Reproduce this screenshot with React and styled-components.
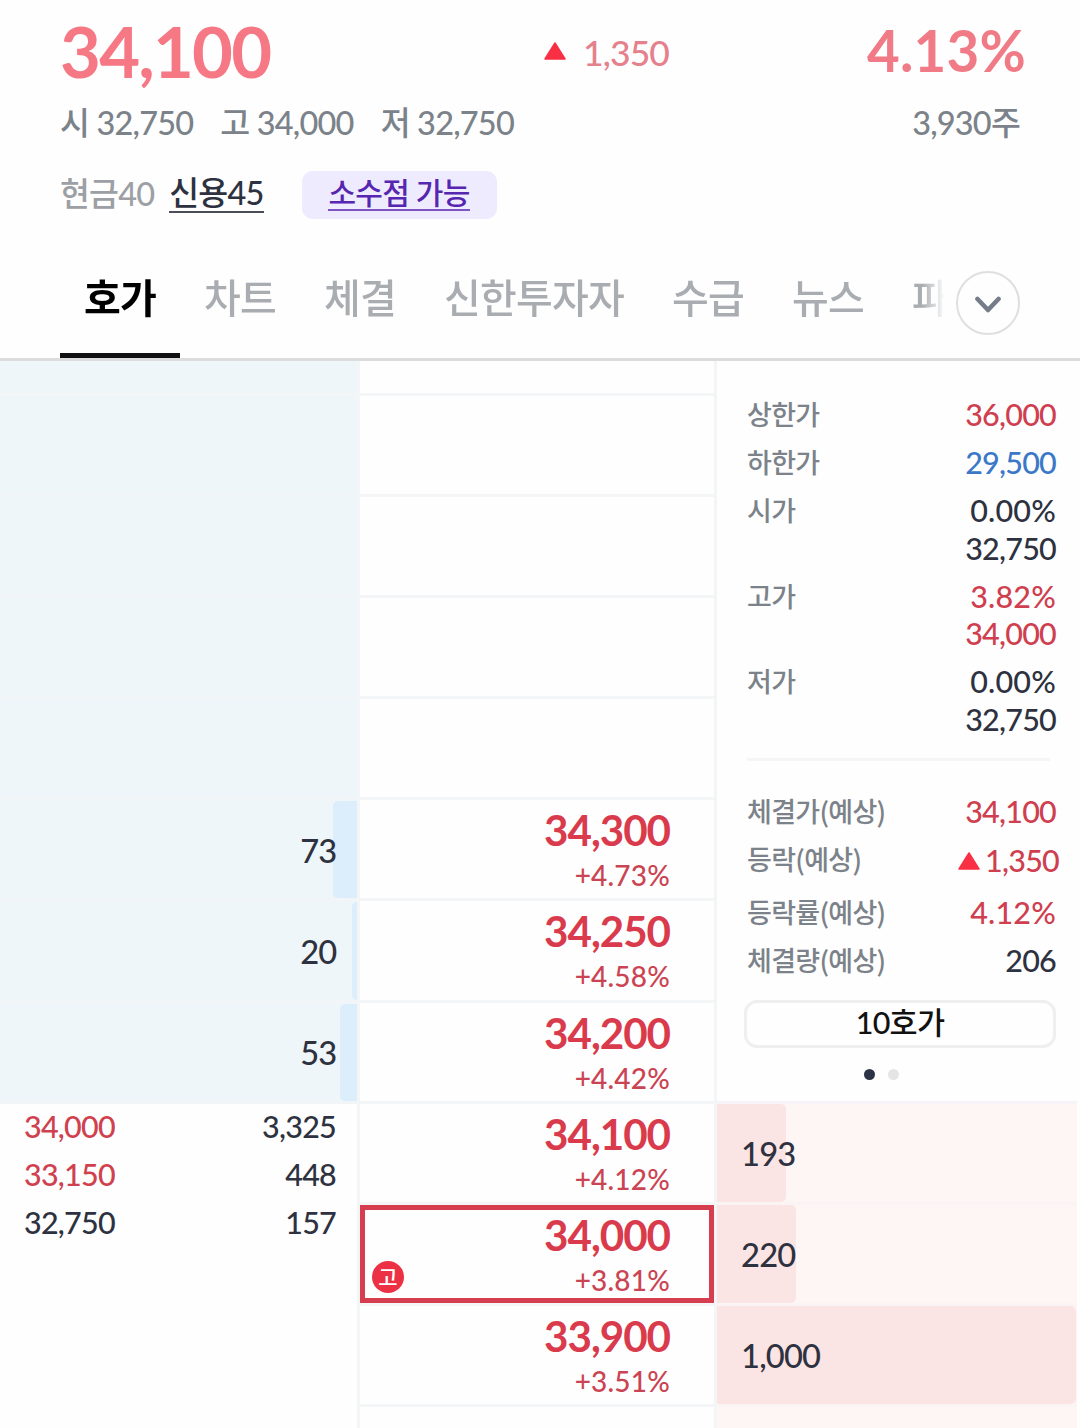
import styled, { createGlobalStyle } from 'styled-components';

const GlobalStyle = createGlobalStyle`
  * {
    box-sizing: border-box;
    letter-spacing: -0.025em;
  }
  body {
    margin: 0;
    background: #fefefe;
    color: #2e3240;
    font-family: Lato, 'Noto Sans CJK KR', sans-serif;
    font-weight: 500;
    font-kerning: none;
  }
`;

const tabs = ['호가', '차트', '체결', '신한투자자', '수급', '뉴스', '파'];

const asks = [
  {},
  {},
  {},
  {},
  { amount: '73', size: 24 },
  { amount: '20', size: 5 },
  { amount: '53', size: 17 },
];

const prices = [
  {},
  {},
  {},
  {},
  { price: '34,300', rate: '+4.73%' },
  { price: '34,250', rate: '+4.58%' },
  { price: '34,200', rate: '+4.42%' },
  { price: '34,100', rate: '+4.12%' },
  { price: '34,000', rate: '+3.81%', current: true, badge: '고' },
  { price: '33,900', rate: '+3.51%' },
  {},
];

const bids = [
  { amount: '193', size: 69 },
  { amount: '220', size: 79 },
  { amount: '1,000', size: 359 },
  {},
];

const trades = [
  { price: '34,000', amount: '3,325', color: '#d0414f' },
  { price: '33,150', amount: '448', color: '#d0414f' },
  { price: '32,750', amount: '157' },
];

const limits = [
  { label: '상한가', price: '36,000', color: '#cf3f50' },
  { label: '하한가', price: '29,500', color: '#3b78c8' },
  { label: '시가', rate: '0.00%', price: '32,750' },
  { label: '고가', rate: '3.82%', price: '34,000', color: '#cf3f50' },
  { label: '저가', rate: '0.00%', price: '32,750' },
];

const Triangle = () => (
  <svg width='22' height='18' viewBox='0 0 22 18'>
    <path d='M11 1 21 17H1Z' fill='#f92f44' stroke='#f92f44' strokeWidth='1.5' strokeLinejoin='round' />
  </svg>
);

const App = () => {
  return (
    <Page>
      <GlobalStyle />
      <Header>
        <Quote>
          <Price>34,100</Price>
          <Change>
            <Triangle />
            <ChangeText>1,350</ChangeText>
          </Change>
          <Rate>4.13%</Rate>
        </Quote>
        <Summary>
          <span>시 32,750</span>
          <span>고 34,000</span>
          <span>저 32,750</span>
          <Volume>3,930주</Volume>
        </Summary>
        <Margins>
          <Cash>현금40</Cash>
          <Credit>신용45</Credit>
          <Chip>
            <ChipText>소수점 가능</ChipText>
          </Chip>
        </Margins>
      </Header>
      <TabBar>
        <TabList>
          {tabs.map((tab, i) => (
            <Tab key={tab} $active={i === 0}>
              {tab}
            </Tab>
          ))}
        </TabList>
        <More>
          <svg width='28' height='18' viewBox='0 0 28 18'>
            <path d='M3.5 3 14 14 24.5 3' fill='none' stroke='#767c8a' strokeWidth='4.6' strokeLinecap='round' strokeLinejoin='round' />
          </svg>
        </More>
      </TabBar>
      <Board>
        <LeftColumn>
          <AskArea>
            <Stub />
            {asks.map((ask, i) => (
              <AskRow key={i}>
                {ask.amount && <AskBar style={{ width: ask.size }} />}
                <Amount>{ask.amount}</Amount>
              </AskRow>
            ))}
          </AskArea>
          <Trades>
            {trades.map((trade) => (
              <Trade key={trade.price}>
                <Value $color={trade.color}>{trade.price}</Value>
                <Value>{trade.amount}</Value>
              </Trade>
            ))}
          </Trades>
        </LeftColumn>
        <PriceColumn>
          <Stub />
          {prices.map((row, i) => (
            <PriceRow key={i} $current={row.current}>
              <RowPrice>{row.price}</RowPrice>
              <RowRate>{row.rate}</RowRate>
              {row.badge && <Badge>{row.badge}</Badge>}
            </PriceRow>
          ))}
        </PriceColumn>
        <RightColumn>
          <Info>
            {limits.map((item) => (
              <InfoRow key={item.label}>
                <Label>{item.label}</Label>
                <Values>
                  {item.rate && <Percent $color={item.color}>{item.rate}</Percent>}
                  <Value $color={item.color}>{item.price}</Value>
                </Values>
              </InfoRow>
            ))}
            <Divider />
            <InfoRow>
              <Label>체결가(예상)</Label>
              <Value $color='#cf3f50'>34,100</Value>
            </InfoRow>
            <InfoRow $tall>
              <Label>등락(예상)</Label>
              <Expected>
                <Triangle />
                1,350
              </Expected>
            </InfoRow>
            <InfoRow>
              <Label>등락률(예상)</Label>
              <Percent $color='#cf3f50'>4.12%</Percent>
            </InfoRow>
            <InfoRow>
              <Label>체결량(예상)</Label>
              <Value>206</Value>
            </InfoRow>
            <DepthButton>10호가</DepthButton>
            <Dots>
              <Dot $active />
              <Dot />
            </Dots>
          </Info>
          {bids.map((bid, i) => (
            <BidRow key={i}>
              {bid.amount && <BidBar style={{ width: bid.size }} />}
              <Amount>{bid.amount}</Amount>
            </BidRow>
          ))}
        </RightColumn>
      </Board>
    </Page>
  );
};

const Page = styled.div`
  width: 1080px;
  height: 1428px;
  overflow: hidden;
  display: flex;
  flex-direction: column;
`;

const Header = styled.header`
  flex: none;
  height: 240px;
  padding: 0 60px;
`;

const Quote = styled.div`
  display: flex;
  height: 100px;
`;

const Price = styled.div`
  width: 484px;
  color: #f57884;
  font-size: 70.5px;
  font-weight: 700;
  line-height: 101px;
`;

const Change = styled.div`
  display: flex;
  align-items: center;
  gap: 17px;
  height: 102px;
  color: #e5818c;
  font-size: 35.5px;
  line-height: 42px;
`;

const ChangeText = styled.span`
  padding-top: 3px;
`;

const Rate = styled.div`
  margin-left: auto;
  margin-right: -6px;
  color: #f07b87;
  font-size: 56.5px;
  font-weight: 700;
  letter-spacing: 0.2px;
  line-height: 101px;
`;

const Summary = styled.div`
  display: flex;
  gap: 27px;
  color: #7b8289;
  font-size: 32.5px;
  line-height: 45px;
`;

const Volume = styled.span`
  margin-left: auto;
`;

const Margins = styled.div`
  display: flex;
  align-items: center;
  height: 48px;
  margin-top: 25.5px;
  color: #9ca0a4;
  font-size: 32.5px;
  line-height: 37px;
`;

const Cash = styled.span`
  margin-bottom: 3px;
`;

const Credit = styled.a`
  height: 39px;
  margin: 0 38px 3px 15px;
  border-bottom: 2px solid #4a4e5a;
  color: #2e3240;
`;

const Chip = styled.div`
  display: flex;
  align-items: center;
  justify-content: center;
  width: 195px;
  height: 48px;
  padding-bottom: 4px;
  border-radius: 11px;
  background: #edebfd;
`;

const ChipText = styled.span`
  height: 37px;
  border-bottom: 2px solid #7d55c4;
  color: #5726b0;
  font-size: 30px;
`;

const TabBar = styled.nav`
  flex: none;
  display: flex;
  align-items: flex-start;
  height: 121px;
  padding-left: 60px;
  border-bottom: 3px solid #dcdcdd;
`;

const TabList = styled.div`
  display: flex;
  width: 896px;
  overflow: hidden;
  mask-image: linear-gradient(to right, #000 862px, transparent 885px);
`;

const Tab = styled.div`
  flex: none;
  height: 118px;
  padding: 0 24px;
  border-bottom: ${(props) => (props.$active ? '5px solid #101012' : 'none')};
  color: ${(props) => (props.$active ? '#000' : '#a9adb1')};
  font-size: 40px;
  font-weight: ${(props) => (props.$active ? 700 : 500)};
  letter-spacing: -0.8px;
  line-height: 116px;
`;

const More = styled.button`
  display: flex;
  align-items: center;
  justify-content: center;
  width: 64px;
  height: 64px;
  margin: 31px 0 0;
  padding: 4px 0 0;
  border: 2.5px solid #dedfe0;
  border-radius: 50%;
  background: #fefefe;
`;

const Board = styled.main`
  display: grid;
  grid-template-columns: 360px 357px 363px;
  height: 1067px;
`;

const LeftColumn = styled.div`
  border-right: 3px solid #f4f5f7;
`;

const AskArea = styled.div`
  background: #eef6fa;
`;

// lower part of the row that is scrolled out at the top
const Stub = styled.div`
  height: 35px;
  border-bottom: 3px solid #f4f5f7;
`;

const Row = styled.div`
  height: 101.1px;
  border-bottom: 3px solid #f4f5f7;
`;

const AskRow = styled(Row)`
  position: relative;
  display: flex;
  align-items: center;
  justify-content: flex-end;
  padding-right: 20.5px;
  border-color: #f1f5f8;
`;

const AskBar = styled.div`
  position: absolute;
  top: 1px;
  bottom: 0;
  right: 0;
  border-radius: 5px 0 0 5px;
  background: #dceefb;
`;

const Amount = styled.span`
  position: relative;
  padding-top: 2px;
  font-size: 32.7px;
  line-height: 41px;
`;

const Trades = styled.div`
  padding: 4px 21px 0 24px;
`;

const Trade = styled.div`
  display: flex;
  justify-content: space-between;
  height: 48px;
`;

const Value = styled.div`
  color: ${(props) => props.$color || '#2e3240'};
  font-size: 30.5px;
  line-height: 37.4px;
`;

const Percent = styled(Value)`
  letter-spacing: 0.2px;
`;

const PriceColumn = styled.div`
  height: 1067px;
  overflow: hidden;
  border-right: 3px solid #f4f5f7;
`;

const PriceRow = styled(Row)`
  position: relative;
  padding: 5px 44px 0 0;
  text-align: right;
  box-shadow: ${(props) => (props.$current ? 'inset 0 0 0 5px #d63d4e' : 'none')};
`;

const RowPrice = styled.div`
  height: 50px;
  color: #d93b4c;
  font-size: 42.2px;
  font-weight: 700;
  line-height: 50px;
`;

const RowRate = styled.div`
  color: #cb4453;
  font-size: 28px;
  letter-spacing: 0.2px;
  line-height: 40px;
`;

const Badge = styled.div`
  position: absolute;
  left: 12px;
  bottom: 10px;
  width: 32px;
  height: 32px;
  border-radius: 50%;
  background: #ec3144;
  color: #fff;
  font-size: 21px;
  letter-spacing: 0;
  line-height: 32px;
  text-align: center;
`;

const RightColumn = styled.div`
  padding-right: 3px;
`;

const Info = styled.section`
  height: 742.7px;
  padding: 35.4px 21px 0 30px;
  border-bottom: 3px solid #f6f4f6;
`;

const InfoRow = styled.div`
  display: flex;
  justify-content: space-between;
  align-items: flex-start;
  margin-bottom: 10.6px;
  height: ${(props) => (props.$tall ? '42px' : 'auto')};
`;

const Label = styled.div`
  color: #7b8289;
  font-family: 'Noto Sans CJK KR', sans-serif;
  font-size: 27px;
  letter-spacing: -0.7px;
  line-height: 35px;
`;

const Values = styled.div`
  text-align: right;
`;

const Expected = styled.div`
  display: flex;
  align-items: center;
  gap: 5px;
  margin-right: -3px;
  color: #cf3f50;
  font-size: 30.5px;
  line-height: 39px;
`;

const Divider = styled.div`
  width: 303px;
  height: 3px;
  margin: 20px 0 32px;
  background: #f5f5f6;
`;

const DepthButton = styled.button`
  display: block;
  width: 312px;
  height: 48px;
  margin: 20.6px 0 0 -3px;
  padding: 0 0 3px;
  border: 3px solid #efeff0;
  border-radius: 13px;
  background: #fefefe;
  color: #111;
  font: inherit;
  font-size: 30.5px;
  line-height: 39px;
`;

const Dots = styled.div`
  display: flex;
  gap: 13px;
  margin: 21px 0 0 117px;
`;

const Dot = styled.i`
  width: 11px;
  height: 11px;
  border-radius: 50%;
  background: ${(props) => (props.$active ? '#2c3346' : '#e5e5e6')};
`;

const BidRow = styled(Row)`
  position: relative;
  display: flex;
  align-items: center;
  padding-left: 24px;
  background: #fef6f5;
  border-color: #fbf4f4;
`;

const BidBar = styled.div`
  position: absolute;
  top: 0;
  bottom: 0;
  left: 0;
  border-radius: 0 5px 5px 0;
  background: #fbe5e4;
`;

export default App;
